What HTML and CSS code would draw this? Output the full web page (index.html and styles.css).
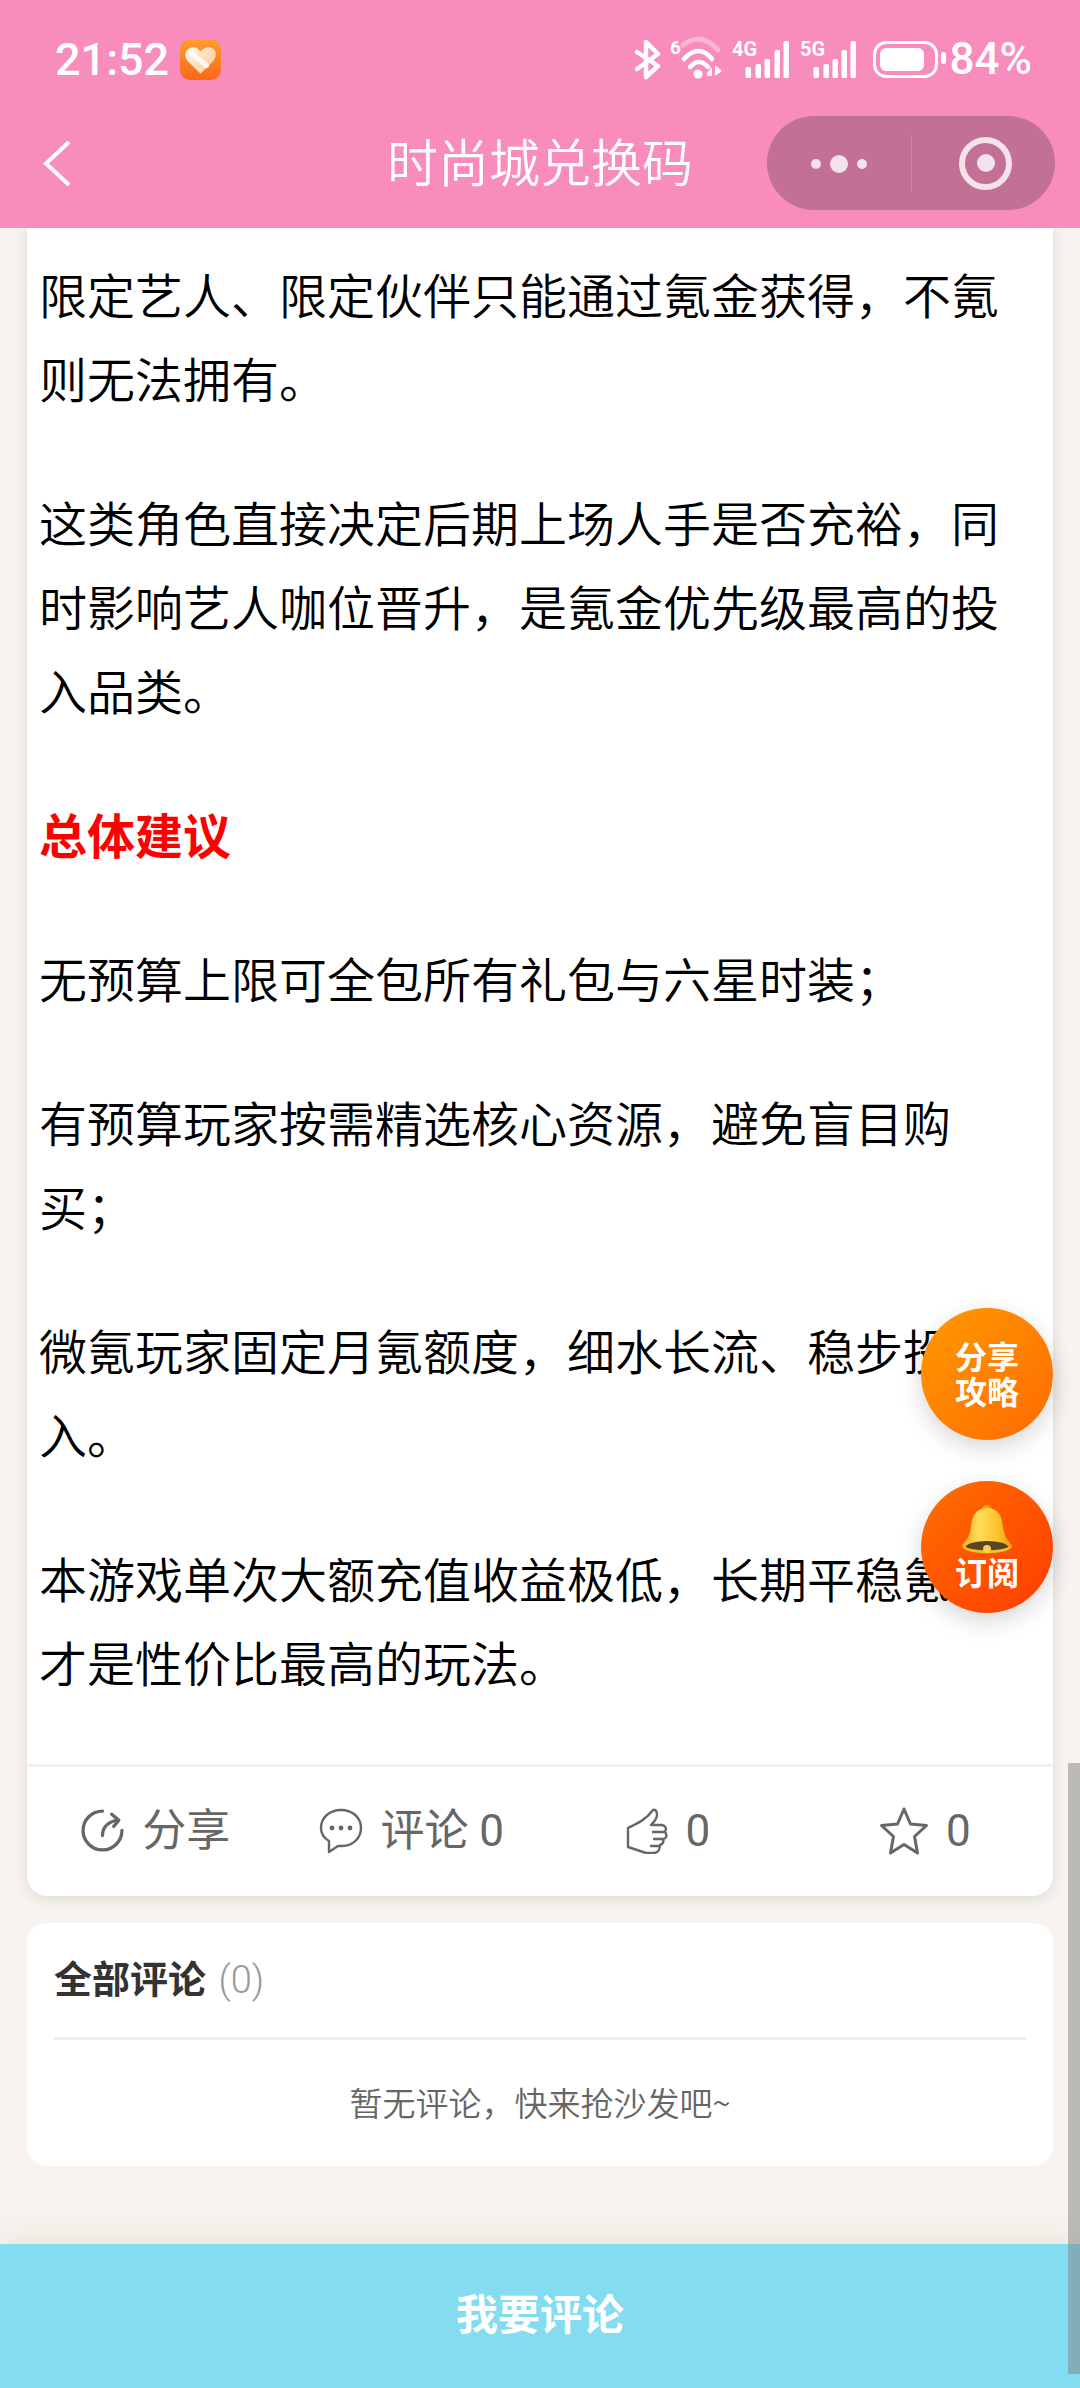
FILE: index.html
```html
<!DOCTYPE html>
<html lang="zh-CN">

<head>
    <meta charset="UTF-8">
    <meta name="viewport" content="width=device-width, initial-scale=1.0">
    <title>时尚城兑换码</title>
    <link rel="stylesheet" href="styles.css">
</head>

<body>
    <div class="page">
        <header class="topbar">
            <div class="status">
                <span class="time">21:52</span>
                <svg class="app-icon" width="41" height="41" viewBox="0 0 40 40">
                    <defs>
                        <linearGradient id="appbg" x1="0" y1="0" x2="0" y2="1">
                            <stop offset="0" stop-color="#ff9c30" />
                            <stop offset="1" stop-color="#f8691a" />
                        </linearGradient>
                        <linearGradient id="heart" x1="0" y1="0" x2="1" y2="0.6">
                            <stop offset="0" stop-color="#fff8f0" />
                            <stop offset="1" stop-color="#fbcf9a" />
                        </linearGradient>
                    </defs>
                    <rect width="40" height="40" rx="10" fill="url(#appbg)" />
                    <path d="M20 34 L8 22 C2 15 7 8 13 8 C16 8 18 10 20 12 C22 10 25 8 28 8 C34 8 38 15 32 22 Z" fill="url(#heart)" />
                    <path d="M11 14 L26 26" stroke="#fff" stroke-width="5" stroke-linecap="round" opacity="0.8" />
                </svg>
                <div class="status-right">
                    <svg class="status-icons" width="320" height="50" viewBox="0 0 320 50">
                        <!-- bluetooth -->
                        <path d="M7 17 L28 31 L16 42 L16 7 L28 19 L7 34" fill="none" stroke="#fff" stroke-width="4.5" stroke-linejoin="round" stroke-linecap="round" />
                        <!-- wifi -->
                        <text x="40" y="19" class="tiny tiny-six">6</text>
                        <path d="M53 10 Q71 -4 88 15" fill="none" stroke="#fff" stroke-opacity="0.35" stroke-width="5" stroke-linecap="round" />
                        <path d="M54 24 Q69 8 82 24" fill="none" stroke="#fff" stroke-width="4.5" stroke-linecap="round" />
                        <path d="M60 32 Q69 22 78 32" fill="none" stroke="#fff" stroke-width="4.5" stroke-linecap="round" />
                        <circle cx="68" cy="39" r="4.5" fill="#fff" />
                        <path d="M77 38 L82 32 L82 41 L77 41 Z M85 30 L92 36 L85 41 Z" fill="#fff" />
                        <!-- 4G -->
                        <text x="102" y="21" class="tiny">4G</text>
                        <rect x="115.5" y="32" width="5.5" height="11" rx="1.5" fill="#fff" />
                        <rect x="125.5" y="29" width="5.5" height="14" rx="1.5" fill="#fff" />
                        <rect x="134.5" y="24" width="5.5" height="19" rx="1.5" fill="#fff" />
                        <rect x="144.5" y="15" width="5.5" height="28" rx="1.5" fill="#fff" />
                        <rect x="153.5" y="6" width="5.5" height="37" rx="1.5" fill="#fff" />
                        <!-- 5G -->
                        <text x="170" y="21" class="tiny">5G</text>
                        <rect x="183.5" y="32" width="5.5" height="11" rx="1.5" fill="#fff" />
                        <rect x="193.5" y="29" width="5.5" height="14" rx="1.5" fill="#fff" />
                        <rect x="202.5" y="24" width="5.5" height="19" rx="1.5" fill="#fff" />
                        <rect x="211.5" y="15" width="5.5" height="28" rx="1.5" fill="#fff" />
                        <rect x="220.5" y="6" width="5.5" height="37" rx="1.5" fill="#fff" />
                        <!-- battery -->
                        <rect x="244.5" y="7.5" width="62" height="34" rx="12" fill="none" stroke="#fff" stroke-width="3" />
                        <rect x="250" y="13" width="44" height="23" rx="6" fill="#fff" />
                        <rect x="311" y="17" width="5" height="12" rx="2.5" fill="#fff" />
                    </svg>
                    <span class="battery">84%</span>
                </div>
            </div>
            <nav class="navbar">
                <svg class="back" width="30" height="52" viewBox="0 0 30 52">
                    <path d="M27 5 L4 26.5 L27 48" fill="none" stroke="#fff" stroke-width="4" />
                </svg>
                <h1 class="title">时尚城兑换码</h1>
                <div class="capsule">
                    <div class="capsule-dots">
                        <span class="dot"></span>
                        <span class="dot dot-big"></span>
                        <span class="dot"></span>
                    </div>
                    <div class="capsule-target"><span></span></div>
                </div>
            </nav>
        </header>

        <main class="content">
            <section class="card article">
                <div class="article-body">
                    <p>限定艺人、限定伙伴只能通过氪金获得，不氪则无法拥有。</p>
                    <p>这类角色直接决定后期上场人手是否充裕，同时影响艺人咖位晋升，是氪金优先级最高的投入品类。</p>
                    <p class="red">总体建议</p>
                    <p>无预算上限可全包所有礼包与六星时装；</p>
                    <p>有预算玩家按需精选核心资源，避免盲目购买；</p>
                    <p>微氪玩家固定月氪额度，细水长流、稳步投入。</p>
                    <p>本游戏单次大额充值收益极低，长期平稳氪金才是性价比最高的玩法。</p>
                </div>
                <div class="actions">
                    <div class="action">
                        <svg width="45" height="45" viewBox="0 0 44 44">
                            <path d="M22 3 A19 19 0 1 0 41 22" fill="none" stroke="#666" stroke-width="3.2" stroke-linecap="round" />
                            <path d="M22 27 Q22 15 36 12" fill="none" stroke="#666" stroke-width="3.2" stroke-linecap="round" />
                            <path d="M31 6 L38 12 L33 18" fill="none" stroke="#666" stroke-width="3.2" stroke-linecap="round" stroke-linejoin="round" />
                        </svg>
                        <span>分享</span>
                    </div>
                    <div class="action">
                        <svg width="44" height="46" viewBox="0 0 44 46">
                            <path d="M22 2 C10 2 2 10 2 20 C2 26 5 30 10 33 L10 44 L19 38 C21 38 22 38 23 38 C34 38 42 30 42 20 C42 10 34 2 22 2 Z" fill="none" stroke="#666" stroke-width="2.4" stroke-linejoin="round" />
                            <circle cx="13" cy="20" r="2.4" fill="#666" />
                            <circle cx="22" cy="20" r="2.4" fill="#666" />
                            <circle cx="31" cy="20" r="2.4" fill="#666" />
                        </svg>
                        <span>评论 0</span>
                    </div>
                    <div class="action">
                        <svg width="42" height="46" viewBox="0 0 42 46">
                            <path d="M2 20 C10 16 20 12 27 2 C30 1 31 4 31 7 C31 11 28 14 25 17 L36 17 C40 18 41 21 39 23 L40 26 C41 28 40 31 37 31 C38 34 37 36 34 37 C34 41 32 45 28 45 L20 45 L2 39 Z" fill="none" stroke="#666" stroke-width="2.4" stroke-linejoin="round" />
                            <path d="M27 24 L38 24 M28 31 L37 31 M25 38 L33 38" fill="none" stroke="#666" stroke-width="2.4" stroke-linecap="round" />
                        </svg>
                        <span>0</span>
                    </div>
                    <div class="action">
                        <svg width="50" height="50" viewBox="0 0 50 50">
                            <path d="M25 3 L31.5 18 L47.5 19.5 L35.5 30.5 L38.5 47 L25 38.5 L11.5 47 L14.5 30.5 L2.5 19.5 L18.5 18 Z" fill="none" stroke="#666" stroke-width="3" stroke-linejoin="round" />
                        </svg>
                        <span>0</span>
                    </div>
                </div>
            </section>

            <section class="card comments">
                <div class="comments-head"><b>全部评论</b> <span>(0)</span></div>
                <div class="comments-empty">暂无评论，快来抢沙发吧~</div>
            </section>
        </main>

        <footer class="comment-bar">我要评论</footer>

        <div class="fab fab-share">分享<br>攻略</div>
        <div class="fab fab-sub">
            <svg width="52" height="50" viewBox="0 0 52 50">
                <defs>
                    <linearGradient id="bell" x1="0" y1="0" x2="1" y2="0">
                        <stop offset="0" stop-color="#f0b41e" />
                        <stop offset="0.35" stop-color="#ffdc5a" />
                        <stop offset="0.7" stop-color="#fbc42c" />
                        <stop offset="1" stop-color="#e39c14" />
                    </linearGradient>
                </defs>
                <circle cx="26" cy="5" r="5" fill="#e8a61c" />
                <path d="M26 3 C14 3 11 12 10 22 C9 30 6 35 1 40 C8 47 44 47 51 40 C46 35 43 30 42 22 C41 12 38 3 26 3 Z" fill="url(#bell)" />
                <ellipse cx="26" cy="42" rx="21" ry="6" fill="#5b4426" />
                <path d="M1 40 C8 47 44 47 51 40 L50 43 C42 50 10 50 2 43 Z" fill="#f5bf2a" />
                <circle cx="26" cy="44" r="4" fill="#f7d04a" />
            </svg>
            <span>订阅</span>
        </div>

        <div class="scrollbar"></div>
    </div>
</body>

</html>
```

FILE: styles.css
```css
* {
    box-sizing: border-box;
}

html,
body {
    margin: 0;
    padding: 0;
}

body {
    font-family: "Noto Sans CJK SC", "Noto Sans", sans-serif;
}

.page {
    position: relative;
    width: 1080px;
    height: 2388px;
    overflow: hidden;
    background: #f7f4ef;
    display: flex;
    flex-direction: column;
}

/* top pink area */
.topbar {
    height: 228px;
    flex: none;
    background: #f78cbd;
    color: #fff;
    position: relative;
    z-index: 2;
}

.status {
    height: 116px;
    display: flex;
    align-items: flex-start;
    padding: 39px 48px 0 55px;
}

.time {
    font-family: Roboto, sans-serif;
    font-size: 45px;
    font-weight: 500;
    line-height: 43px;
    margin-top: -1px;
}

.app-icon {
    margin-left: 11px;
}

.status-right {
    margin-left: auto;
    display: flex;
    align-items: flex-start;
}

.status-icons {
    margin-top: -4px;
    overflow: visible;
}

.tiny {
    font-family: Roboto, sans-serif;
    font-size: 20px;
    font-weight: 700;
    fill: #fff;
}

.tiny-six {
    font-size: 19px;
}

.battery {
    font-family: Roboto, sans-serif;
    font-size: 44px;
    font-weight: 500;
    line-height: 43px;
    margin-top: -1px;
}

.navbar {
    height: 112px;
    display: flex;
    align-items: flex-start;
    position: relative;
    padding: 0 25px 0 42px;
}

.back {
    margin-top: 21px;
}

.title {
    position: absolute;
    left: 0;
    right: 0;
    top: 14px;
    margin: 0;
    text-align: center;
    font-size: 51px;
    font-weight: 350;
    line-height: 60px;
}

.capsule {
    margin-left: auto;
    width: 288px;
    height: 94px;
    border-radius: 47px;
    background: #c27095;
    display: flex;
}

.capsule-dots {
    width: 145px;
    height: 57px;
    margin-top: 19px;
    border-right: 1px solid #cc81a4;
    display: flex;
    align-items: center;
    justify-content: center;
    gap: 9px;
}

.dot {
    width: 10px;
    height: 10px;
    border-radius: 50%;
    background: #f3e2ea;
}

.dot-big {
    width: 18px;
    height: 18px;
}

.capsule-target {
    flex: 1;
    display: flex;
    align-items: center;
    justify-content: center;
    padding-left: 4px;
}

.capsule-target span {
    width: 53px;
    height: 53px;
    border: 6px solid #f3e2ea;
    border-radius: 50%;
    display: flex;
    align-items: center;
    justify-content: center;
}

.capsule-target span::after {
    content: "";
    width: 18px;
    height: 18px;
    border-radius: 50%;
    background: #f3e2ea;
}

/* article */
.content {
    padding: 0 27px;
}

.card {
    background: #fff;
}

.article {
    border-radius: 0 0 20px 20px;
    box-shadow: 0 2px 14px rgba(90, 70, 50, 0.16);
}

.article-body {
    padding: 23px 40px 61px 12px;
    font-size: 48px;
    font-weight: 350;
    line-height: 84px;
    color: #000;
}

.article-body p {
    margin: 0 0 60px;
}

.article-body p:last-child {
    margin-bottom: 0;
}

.article-body .red {
    color: #f00;
    font-weight: 700;
}

.actions {
    height: 132px;
    border-top: 3px solid #f0f0f0;
    display: grid;
    grid-template-columns: repeat(4, 1fr);
    color: #666;
    font-size: 44px;
}

.action {
    display: flex;
    align-items: center;
    justify-content: center;
    gap: 17px;
    padding-bottom: 2px;
}

.action span {
    font-family: Roboto, "Noto Sans CJK SC", sans-serif;
    font-weight: 400;
    line-height: 50px;
}

/* comments */
.comments {
    margin-top: 27px;
    height: 243px;
    border-radius: 20px;
    padding: 0 26px;
}

.comments-head {
    height: 117px;
    padding-top: 27px;
    border-bottom: 3px solid #f0f0f0;
    font-size: 38px;
    line-height: 54px;
}

.comments-head b {
    color: #333;
    margin-left: 1px;
}

.comments-head span {
    font-family: Roboto, sans-serif;
    font-weight: 300;
    color: #999;
    margin-left: 4px;
}

.comments-empty {
    margin-top: 38px;
    text-align: center;
    font-size: 33px;
    font-weight: 350;
    line-height: 48px;
    color: #666;
}

/* bottom button */
.comment-bar {
    margin-top: auto;
    height: 144px;
    flex: none;
    background: #83dcf0;
    box-shadow: 0 -2px 30px rgba(90, 70, 50, 0.12);
    color: #fff;
    font-size: 42px;
    font-weight: 700;
    line-height: 136px;
    text-align: center;
    position: relative;
}

/* floating buttons */
.fab {
    position: absolute;
    left: 921px;
    width: 132px;
    height: 132px;
    border-radius: 50%;
    color: #fff;
    font-size: 32px;
    font-weight: 700;
    line-height: 35px;
    text-align: center;
    box-shadow: 0 8px 24px rgba(0, 0, 0, 0.16);
}

.fab-share {
    top: 1308px;
    padding-top: 30px;
    background: linear-gradient(135deg, #ff9a00, #ff6a00);
}

.fab-sub {
    top: 1481px;
    padding-top: 24px;
    background: linear-gradient(135deg, #ff6f00, #ff3c00);
}

.fab-sub svg {
    display: block;
    margin: 0 auto;
}

.fab-sub span {
    display: block;
    margin-top: -1px;
}

.scrollbar {
    position: absolute;
    left: 1068px;
    top: 1763px;
    width: 12px;
    height: 611px;
    background: rgba(128, 128, 128, 0.5);
}
```
